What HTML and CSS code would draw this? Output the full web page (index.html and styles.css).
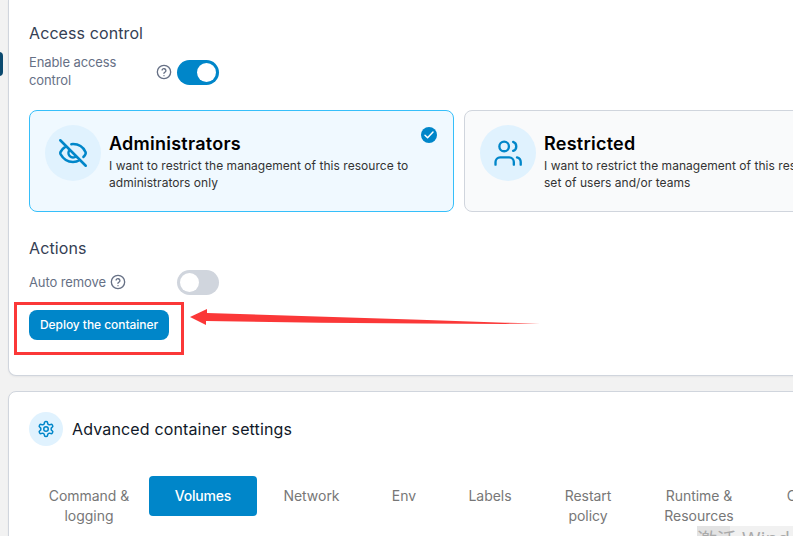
FILE: index.html
```html
<!DOCTYPE html>
<html lang="en">
<head>
<meta charset="utf-8">
<title>Create container</title>
<link rel="stylesheet" href="styles.css">
</head>
<body>
<svg class="defs" width="0" height="0">
  <symbol id="help" viewBox="0 0 24 24"><circle cx="12" cy="12" r="10"/><path d="M9.1 9a3 3 0 0 1 5.8 1c0 2-3 2.500-3 4M12 17.500h.01"/></symbol>
</svg>
<span class="sidebar-toggle"></span>
<main class="page">
  <section class="panel form">
    <h2 class="section-title">Access control</h2>
    <div class="field access">
      <span class="label">Enable access control</span>
      <svg class="help"><use href="#help"/></svg>
      <span class="switch on"></span>
    </div>
    <div class="options">
      <article class="option selected">
        <span class="badge"><svg viewBox="1 1 22 22"><path d="M10.700 5.100A10 10 0 0 1 12 5c5 0 8.300 3 9.800 6.200.3.5.3 1.100 0 1.600a13 13 0 0 1-1.600 2.300M6.600 6.600c-2 1.300-3.400 2.900-4.400 4.600a1.600 1.600 0 0 0 0 1.600C4 16 7.300 19 12 19c2 0 3.800-.6 5.400-1.600M9.500 9.500a3.500 3.500 0 0 0 5 5M2 2l20 20"/></svg></span>
        <div class="copy"><h3>Administrators</h3><p>I want to restrict the management of this resource to administrators only</p></div>
        <svg class="check" viewBox="0 0 16 16"><circle cx="8" cy="8" r="8"/><path d="M4 8.300l2.600 2.500 5.400-5.800"/></svg>
      </article>
      <article class="option">
        <span class="badge"><svg viewBox="0 0 24 24"><path d="M17 22v-2.200a4 4 0 0 0-4-4H5.300a4 4 0 0 0-4 4V22M22.900 22v-2.200a4.200 4.200 0 0 0-3.200-4M16.400 2.500a4.100 4.100 0 0 1 0 7.700"/><circle cx="8.700" cy="6.400" r="4.100"/></svg></span>
        <div class="copy"><h3>Restricted</h3><p>I want to restrict the management of this resource to a set of users and/or teams</p></div>
      </article>
    </div>
    <h2 class="section-title">Actions</h2>
    <div class="field auto">
      <span class="label">Auto remove</span>
      <svg class="help"><use href="#help"/></svg>
      <span class="switch"></span>
    </div>
    <button class="deploy">Deploy the container</button>
  </section>
  <section class="panel settings">
    <header class="settings-head">
      <span class="badge small"><svg viewBox="0 0 24 24"><path d="M12.220 2h-.44a2 2 0 0 0-2 2v.18a2 2 0 0 1-1 1.730l-.43.25a2 2 0 0 1-2 0l-.15-.08a2 2 0 0 0-2.730.73l-.22.38a2 2 0 0 0 .73 2.730l.15.1a2 2 0 0 1 1 1.720v.51a2 2 0 0 1-1 1.740l-.15.09a2 2 0 0 0-.73 2.730l.22.38a2 2 0 0 0 2.730.73l.15-.08a2 2 0 0 1 2 0l.43.25a2 2 0 0 1 1 1.730V20a2 2 0 0 0 2 2h.44a2 2 0 0 0 2-2v-.18a2 2 0 0 1 1-1.730l.43-.25a2 2 0 0 1 2 0l.15.08a2 2 0 0 0 2.730-.73l.22-.39a2 2 0 0 0-.73-2.730l-.15-.08a2 2 0 0 1-1-1.740v-.5a2 2 0 0 1 1-1.740l.15-.09a2 2 0 0 0 .73-2.730l-.22-.38a2 2 0 0 0-2.730-.73l-.15.08a2 2 0 0 1-2 0l-.43-.25a2 2 0 0 1-1-1.730V4a2 2 0 0 0-2-2z"/><circle cx="12" cy="12" r="3"/></svg></span>
      <h2>Advanced container settings</h2>
    </header>
    <nav class="tabs">
      <a>Command &amp; logging</a><a class="active">Volumes</a><a>Network</a><a>Env</a><a>Labels</a><a>Restart policy</a><a>Runtime &amp; Resources</a><a>Capabilities</a>
    </nav>
  </section>
</main>
<div class="marker-box"></div>
<svg class="marker-arrow" width="350" height="18" viewBox="0 0 350 18"><path d="M0 9L17 1V5L230 11.800 315 14.700 350 15.500 315 15.900 230 15.500 130 14.700 16 13.100V17z"/></svg>
<div class="watermark"><span class="cjk">激活</span><span>Windows</span></div>
</body>
</html>
```

FILE: styles.css
```css
* { box-sizing: border-box; }
html { overflow: hidden; }
body { margin: 0; width: 793px; height: 536px; overflow: hidden; position: relative; background: #f2f2f2; font-family: Inter, "Noto Sans CJK SC", sans-serif; }
h2, h3, p { margin: 0; font-weight: 400; }
svg { fill: none; stroke: #0086c9; stroke-width: 2; stroke-linecap: round; stroke-linejoin: round; display: block; flex: none; }
.defs { position: absolute; }
.sidebar-toggle { position: absolute; left: -10px; top: 52px; width: 13px; height: 24px; border-radius: 4px; background: #0b4a6f; }
.page { width: 920px; padding-left: 8px; }
.panel { background: #fff; border: 1px solid #d0d5dd; box-shadow: 0 1px 2px rgba(16, 24, 40, .05); padding-left: 20px; }
.form { height: 376px; border-top: 0; border-radius: 0 0 8px 8px; padding-top: 22px; }
.section-title { font-size: 16px; line-height: 22px; color: #344054; letter-spacing: .1px; }
.field { display: flex; align-items: center; width: 190px; }
.access { height: 36px; margin-top: 10px; }
.auto { height: 26px; margin-top: 10px; }
.label { font-size: 13px; line-height: 18px; color: #667085; letter-spacing: -.1px; }
.access .label { width: 100px; margin: -2px 27px 0 0; }
.help { width: 16px; height: 16px; stroke: #667085; }
.auto .help { margin-left: 4px; }
.switch { width: 42px; height: 25px; border-radius: 13px; background: #d0d5dd; margin-left: auto; padding: 3px; display: flex; }
.switch::before { content: ""; width: 19px; height: 19px; border-radius: 50%; background: #fff; }
.switch.on { background: #0086c9; justify-content: flex-end; }
.options { display: grid; grid-template-columns: 425px 425px; gap: 10px; margin: 20px 0 25px; }
.option { height: 102px; border: 1px solid #d0d5dd; border-radius: 8px; background: #f9fafb; display: flex; padding: 14px 15px; position: relative; }
.option.selected { background: #f0f9ff; border-color: #36bffa; }
.badge { width: 56px; height: 56px; border-radius: 50%; background: #e0f2fe; display: grid; place-items: center; flex: none; }
.badge svg { width: 28px; height: 28px; overflow: visible; }
.copy { margin-left: 8px; width: 330px; padding-top: 7px; }
.copy h3 { font-size: 18px; line-height: 24px; margin-bottom: 1px; font-weight: 600; color: #000; letter-spacing: .25px; }
.copy p { font-size: 12px; line-height: 17px; color: #333; letter-spacing: .04px; }
.check { position: absolute; right: 16px; top: 16px; width: 16px; height: 16px; fill: #0086c9; stroke: none; }
.check path { fill: none; stroke: #fff; stroke-width: 1.500; }
.deploy { display: block; width: 140px; height: 30px; margin-top: 15px; padding: 0; border: 0; border-radius: 8px; background: #0086c9; color: #fff; font: 500 12px/30px Inter, sans-serif; letter-spacing: -.05px; }
.settings { height: 200px; margin-top: 15px; border-radius: 8px; padding-top: 20px; }
.settings-head { display: flex; align-items: center; gap: 9px; height: 34px; }
.settings-head h2 { font-size: 16px; line-height: 22px; color: #101828; letter-spacing: .15px; }
.badge.small { width: 34px; height: 34px; }
.badge.small svg { width: 18px; height: 18px; stroke-width: 2; }
.tabs { display: grid; grid-template-columns: 120px 108px 109px 76px 96px 100px 122px 130px; margin-top: 30px; align-items: start; }
.tabs a { padding: 10px 12px; font-size: 14px; line-height: 20px; color: #777; text-align: center; letter-spacing: -.03px; }
.tabs .active { background: #0086c9; color: #fff; border-radius: 4px; font-weight: 500; letter-spacing: -.2px; }
.marker-box { position: absolute; left: 14px; top: 302px; width: 170px; height: 53px; border: 3px solid #fb3838; }
.marker-arrow { position: absolute; left: 190px; top: 308px; fill: #fb3838; stroke: none; }
.watermark { position: absolute; left: 697px; top: 526px; width: 96px; height: 10px; overflow: hidden; background: linear-gradient(90deg, #e3e3e3 33px, #f1f1f1 33px); color: #aaa; font: 20px/25px "Open Sans", "Noto Sans CJK SC", sans-serif; white-space: nowrap; display: flex; }
.watermark span { flex: none; }
.watermark .cjk { width: 45px; line-height: 28px; letter-spacing: -.5px; font-family: "Noto Sans CJK SC", sans-serif; }
```
